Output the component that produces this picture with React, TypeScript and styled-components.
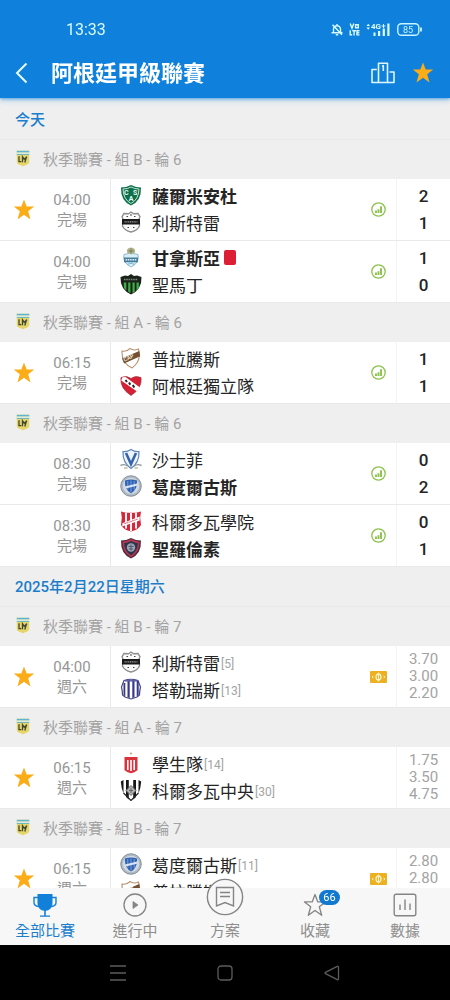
import React from "react";
import styled, { createGlobalStyle } from "styled-components";

const color = {
  brand: "#0f80dc",
  link: "#1b7ecb",
  ink: "#242424",
  muted: "#969696",
  faint: "#a3a3a3",
  band: "#efefef",
  line: "#e9e9e9",
  gold: "#fbac17",
  green: "#8bc34a",
};

const GlobalStyle = createGlobalStyle`
  * { box-sizing: border-box; }
  body {
    margin: 0;
    font-family: Roboto, "Noto Sans CJK TC", sans-serif;
    color: ${color.ink};
    background: #fff;
  }
  button { font: inherit; color: inherit; background: none; border: 0; padding: 0; cursor: pointer; }
  h1, h2, h3, ul, p { margin: 0; padding: 0; font-weight: 400; }
  ul { list-style: none; }
  svg { display: block; flex: none; }
`;

const Screen = styled.div`
  display: flex;
  flex-direction: column;
  height: 100vh;
`;

const Header = styled.header`
  background: ${color.brand};
  color: #fff;
  position: relative;
  z-index: 1;
  box-shadow: 0 1px 3px rgba(15, 128, 220, 0.6), 0 3px 6px rgba(15, 128, 220, 0.2);
`;

const StatusBar = styled.div`
  display: flex;
  align-items: center;
  justify-content: space-between;
  height: 48px;
  padding: 10px 28px 0 66px;
  font-size: 16px;
  color: #d8fbff;
`;

const StatusIcons = styled.div`
  display: flex;
  align-items: center;
  gap: 6px;
`;

const TitleBar = styled.div`
  display: flex;
  align-items: center;
  height: 50px;
  padding: 0 16px 0 14px;
`;

const Title = styled.h1`
  flex: 1;
  padding: 2px 0 0 22px;
  font-size: 22px;
  font-weight: 700;
  line-height: 32px;
`;

const TitleActions = styled.div`
  display: flex;
  align-items: center;
  gap: 17px;
`;

const Feed = styled.main`
  flex: 1;
  min-height: 0;
  padding-top: 2px;
  overflow-y: auto;
  background: ${color.band};
  scrollbar-width: none;
`;

const DateHeading = styled.h2`
  height: 40px;
  padding-left: 15px;
  border-bottom: 1px solid ${color.line};
  font-size: 15px;
  font-weight: 500;
  line-height: 40px;
  color: ${color.link};
`;

const LeagueHeading = styled.h3`
  display: flex;
  align-items: center;
  gap: 13px;
  height: 39px;
  padding: 0 0 2px 16px;
  font-size: 15px;
  color: ${color.faint};
`;

const MatchRow = styled.li`
  display: grid;
  grid-template-columns: 48px 63px 1fr 36px 53px;
  height: 62px;
  background: #fff;
  border-bottom: 1px solid ${color.line};
`;

const StarCell = styled.div`
  display: grid;
  place-items: center;
`;

const TimeCell = styled.div`
  display: flex;
  flex-direction: column;
  justify-content: center;
  padding-right: 14px;
  border-right: 1px solid ${color.line};
  font-size: 15px;
  line-height: 20px;
  text-align: center;
  color: ${color.muted};
`;

const Teams = styled.div`
  display: flex;
  flex-direction: column;
  justify-content: center;
  padding: 0 0 2px 9px;
`;

const TeamLine = styled.div<{ $winner?: boolean }>`
  display: flex;
  align-items: center;
  height: 27px;
  font-size: 17px;
  font-weight: ${(p) => (p.$winner ? 700 : 400)};
  white-space: nowrap;
`;

const TeamName = styled.span`
  padding-left: 10px;
`;

const Rank = styled.small`
  padding: 4px 0 0 1px;
  font-size: 12px;
  color: ${color.faint};
`;

const RedCard = styled.span`
  width: 12px;
  height: 15px;
  margin-left: 4px;
  border-radius: 2px;
  background: #dc1f35;
`;

const BadgeCell = styled.div`
  display: grid;
  place-items: center;
  padding-right: 1px;
  border-right: 1px solid #f3f3f3;
`;

const Results = styled.div<{ $odds?: boolean }>`
  display: flex;
  flex-direction: column;
  justify-content: center;
  text-align: center;
  font-size: ${(p) => (p.$odds ? 15 : 17)}px;
  font-weight: ${(p) => (p.$odds ? 400 : 500)};
  line-height: ${(p) => (p.$odds ? 17 : 27)}px;
  color: ${(p) => (p.$odds ? color.faint : color.ink)};
`;

const TabBar = styled.nav`
  display: grid;
  grid-template-columns: repeat(5, 1fr);
  position: relative;
  z-index: 1;
  height: 57px;
  background: #f7f7f7;
`;

const Tab = styled.button<{ $active?: boolean }>`
  display: flex;
  flex-direction: column;
  align-items: center;
  justify-content: flex-end;
  gap: 2px;
  padding-bottom: 3px;
  font-size: 15px;
  line-height: 22px;
  color: ${(p) => (p.$active ? color.link : "#8e8e8e")};
`;

const TabIcon = styled.span<{ $raised?: boolean }>`
  display: flex;
  align-items: ${(p) => (p.$raised ? "flex-end" : "center")};
  justify-content: center;
  position: relative;
  height: 26px;
  padding-bottom: ${(p) => (p.$raised ? 2 : 0)}px;
`;

const Count = styled.span`
  position: absolute;
  top: -2px;
  left: 16px;
  width: 21px;
  border-radius: 8px;
  background: #1278cf;
  color: #fff;
  font-size: 11px;
  line-height: 15px;
  text-align: center;
`;

const SystemBar = styled.div`
  display: flex;
  align-items: center;
  justify-content: space-around;
  height: 55px;
  padding: 0 64px;
  background: #000;
`;

/* ---------- icons ---------- */

const Star = ({ size = 22 }: { size?: number }) => (
  <svg width={size} height={size} viewBox="0 0 22 22" fill={color.gold}>
    <path d="M11 .6l2.700 7h7.500l-6 4.700 2.300 8.100L11 15.700l-6.500 4.700 2.300-8.100-6-4.700h7.500z" />
  </svg>
);

const BackIcon = () => (
  <svg width="15" height="22" viewBox="0 0 15 22" fill="none" stroke="#e6fbff" strokeWidth="2">
    <path d="M12.500 1.500L3 11l9.500 9.500" />
  </svg>
);

const PodiumIcon = () => (
  <svg width="24" height="22" viewBox="0 0 24 22" fill="none" stroke="#dff6ff" strokeWidth="1.600" strokeLinejoin="round">
    <path d="M7.500 20.500V1.200h9v19.300M5.800 7.500H1v13h22V10h-4.500M7.500 7.500v13M11 4.200l1.300-.5V9" />
  </svg>
);

const BellOff = () => (
  <svg width="12" height="13" viewBox="0 0 12 13" fill="none" stroke="#d8fbff" strokeWidth="1.400">
    <path d="M2.500 9.500V6.300a3.500 3.500 0 017 0v3.200M.5 9.700h11M4.800 11.700h2.400M6 1v1.500M1.500 1.800l9.500 10" />
  </svg>
);

const VoLte = () => (
  <svg width="11" height="13" viewBox="0 0 11 13" fill="none" stroke="#d8fbff" strokeWidth="1.400">
    <path d="M1.200.5L3 5.300 4.800.5M6.600 1.700h2.700v3H6.600zM1.200 7.200v4.600h2M3.300 7.700h3.600M5.100 7.700v4.700M10.500 7.700H8v4.200h2.500M8 9.800h2.300" />
  </svg>
);

const Signal = () => (
  <svg width="25" height="13" viewBox="0 0 25 13" fill="#d8fbff" fontFamily="Roboto, sans-serif" fontSize="8" fontWeight="700">
    <path d="M.5 3L2.200.8 4 3zM.5 4.500H4L2.200 6.700z" />
    <text x="5" y="6.300">4G</text>
    <path d="M15.500 2.500h4v1h-4zM17 1h1v4h-1zM7.500 9.500h2V13h-2zM12 8h2.200v5H12zM16.700 5.500h2.200V13h-2.200zM21.300.5h2.200V13h-2.200z" />
  </svg>
);

const Battery = () => (
  <svg width="25" height="13" viewBox="0 0 25 13" fill="none" stroke="#c8f4ff" strokeWidth="1.400">
    <rect x=".8" y=".8" width="21" height="11.400" rx="3.500" />
    <path d="M24 4.500v4" strokeWidth="1.800" />
    <text x="6" y="9.700" fontFamily="Roboto, sans-serif" fontSize="9" fill="#c8f4ff" stroke="none">85</text>
  </svg>
);

const LeagueLogo = () => (
  <svg width="14" height="17" viewBox="0 0 14 17">
    <path d="M.8.800h12.400v11.500c0 2-3.500 2.500-6.200 4.200-2.700-1.700-6.200-2.200-6.200-4.200z" fill="#e6d568" />
    <path d="M.8.800h12.400v1.700H.8z" fill="#5fb4cf" />
    <path d="M.8 2.500h12.400V4H.8z" fill="#dcebe4" />
    <path d="M.8 4h12.400v1H.8z" fill="#72b7bd" />
    <path d="M3 6.300v5.400h2.300M6.500 12.200V6.800l1.700 2.400 2.800-2.400M10.600 6.500L8.800 12.500" fill="none" stroke="#3f4633" strokeWidth="1.300" />
  </svg>
);

const StatsIcon = () => (
  <svg width="15" height="15" viewBox="0 0 15 15" fill="none" stroke={color.green}>
    <circle cx="7.500" cy="7.500" r="6.700" strokeWidth="1.300" />
    <path d="M5 8.500V11M7.500 7.300V11M10 4.200V11" strokeWidth="1.900" />
  </svg>
);

const CashIcon = () => (
  <svg width="17" height="12" viewBox="0 0 17 12">
    <rect width="17" height="12" rx="1" fill="#edb021" />
    <ellipse cx="8.500" cy="6" rx="2.400" ry="3" fill="none" stroke="#fff2c9" strokeWidth="1.300" />
    <path d="M8.500 1.500v9" stroke="#fff2c9" />
    <path d="M3.300 4.800L2.200 6l1.100 1.200M13.700 4.800L14.800 6l-1.100 1.200" fill="none" stroke="#fff2c9" />
  </svg>
);

const TrophyIcon = () => (
  <svg width="24" height="25" viewBox="0 0 24 25" fill="#127fd8">
    <path d="M4.500 1h15v9c0 4.500-2.500 7-6.700 7.800V22.500H17v1.300H7v-1.300h4.200v-4.700C7 17 4.500 14.500 4.500 10z" />
    <path d="M5 4.500H1v5c0 2.500 1.700 3.800 4.700 4M19 4.500h4v5c0 2.500-1.700 3.800-4.700 4" fill="none" stroke="#127fd8" strokeWidth="1.400" />
  </svg>
);

const PlayIcon = () => (
  <svg width="24" height="24" viewBox="0 0 24 24" fill="none" stroke="#858585" strokeWidth="1.300">
    <circle cx="12" cy="12" r="11" />
    <path d="M10 8.500l5 3.500-5 3.500z" fill="#858585" strokeWidth=".8" />
  </svg>
);

const PlanIcon = () => (
  <svg width="38" height="38" viewBox="0 0 38 38" fill="#f7f7f7" stroke="#858585" strokeWidth="1.400">
    <circle cx="19" cy="19" r="17.600" />
    <path d="M10.500 9.500h17v18.500L19 24.500l-8.500 3.500zM14 14.500h10M14 18.500h10" />
  </svg>
);

const OutlineStar = () => (
  <svg width="24" height="24" viewBox="0 0 24 24" fill="none" stroke="#858585" strokeWidth="1.300" strokeLinejoin="round">
    <path d="M12 1.500l2.800 7.400h7.700l-6.200 4.900 2.400 8.500L12 17.400l-6.700 4.900 2.400-8.500-6.200-4.900h7.700z" />
  </svg>
);

const DataIcon = () => (
  <svg width="24" height="24" viewBox="0 0 24 24" fill="none" stroke="#858585" strokeWidth="1.400">
    <rect x="1.200" y="1.200" width="21.600" height="21.600" rx="2" />
    <path d="M7 11.500V17M12 6.500V17M17 10.500V17" />
  </svg>
);

const stroke = { fill: "none", stroke: "#5c5c5c", strokeWidth: 1.3 };
const MenuIcon = () => (
  <svg width="16" height="16" viewBox="0 0 16 16" {...stroke}><path d="M0 1h16M0 8h16M0 15h16" /></svg>
);
const HomeIcon = () => (
  <svg width="16" height="16" viewBox="0 0 16 16" {...stroke}><rect x="1" y="1" width="14" height="14" rx="3" /></svg>
);
const SystemBackIcon = () => (
  <svg width="16" height="16" viewBox="0 0 16 16" {...stroke} strokeLinejoin="round">
    <path d="M14.500 2v12c0 .8-.7 1-1.300.6L1.500 8.600c-.6-.4-.6-.8 0-1.200l11.700-6c.6-.4 1.300-.2 1.300.6z" />
  </svg>
);

/* ---------- club crests ---------- */

const shield = "M1 3.500Q6 3.500 11 1q5 2.500 10 2.500Q21.500 17 11 21.500.5 17 1 3.500z";

const crests: Record<string, React.ReactNode> = {
  sarmiento: (
    <>
      <path d={shield} fill="#0e6f4b" />
      <path d="M3 5Q7.500 5 11 3q3.500 2 8 2-.3 10.500-8 14.500Q3.300 15.500 3 5z" fill="none" stroke="#d5eee2" strokeWidth=".9" />
      <g fill="#eefaf4" fontFamily="Roboto, sans-serif" fontSize="7" fontWeight="700">
        <text x="4" y="10.500">C</text><text x="13" y="10.500">S</text><text x="8.700" y="16.500">A</text>
      </g>
    </>
  ),
  riestra: (
    <>
      <path d="M11 1l2.500 1.800L18 2.500l2 3-.8 2 .3 7.500q-2 4.500-8.500 6-6.500-1.500-8.500-6l.3-7.500-.8-2 2-3 4.500.3z" fill="#fbfbfb" stroke="#909090" strokeWidth="1.400" />
      <path d="M2 8h18v5.500H2z" fill="#1b1b1b" />
      <path d="M4.500 10.800h13" stroke="#a3a3a3" strokeWidth="1.300" strokeDasharray="1.200 .6" />
      <path d="M6.500 5.500h1.500M14 5.500h1.500M10 4h2M7.500 16.500H9M13 16.500h1.500" stroke="#444" strokeWidth="1.200" />
    </>
  ),
  gimnasia: (
    <>
      <path d="M4 8.500q7-3 14 0 2 8-7 12.500Q2 16.500 4 8.500z" fill="#d9eff5" stroke="#8dbbd0" />
      <path d="M4 11.500h14v4.800H4z" fill="#477e9e" />
      <path d="M5.500 13.800h11" stroke="#dcedf4" strokeWidth="1.400" strokeDasharray="1.600 .7" />
      <path d="M7 6.500q-1-4.500 4-5 5 .5 4 5l-4 2z" fill="#b6b389" />
      <path d="M8.500 5h5M11 2.500v5" stroke="#697e5b" strokeWidth=".9" />
      <path d="M7 18.500q4-2.500 8 0" stroke="#75b8d4" fill="none" />
    </>
  ),
  sanmartin: (
    <>
      <path d="M.5 4l4.500-1.500L8 3l3-2 3 2 3-.5L21.500 4q.5 12.500-10.500 17.500Q0 16.500.5 4z" fill="#19231b" />
      <path d="M3.700 9.500h2.600v8L4 15zM8.200 9.500h2.200v10.400l-2.200-1.200zM12.500 9.500h2.200v9.300l-2.200 1.200zM16.500 9.500h2.300V15l-2.300 2.200z" fill="#3fae45" />
      <path d="M4 6.500h14" stroke="#7d8c7e" strokeWidth="1.400" strokeDasharray="1.500 .8" />
    </>
  ),
  platense: (
    <g transform="rotate(-7 11 11)">
      <path d="M3 3Q7.500 4.500 11 1.500 14.500 4.500 19.500 3q2 12-8.500 18Q.5 15 3 3z" fill="#fff" stroke="#b7906f" strokeWidth="1.100" />
      <path d="M2 10.500L20 5l.3 5.500L3.500 15.500z" fill="#735033" />
      <text transform="rotate(-17 4 14)" x="4" y="14" fill="#f5e9dc" fontFamily="Roboto, sans-serif" fontSize="5.500" fontWeight="700">CAP</text>
    </g>
  ),
  independiente: (
    <>
      <path d="M1 3.500Q7 1 11 4.500 15 1 21 3.500 22.500 14 11 21.500-.5 14 1 3.500z" fill="#d52035" stroke="#9f3440" strokeWidth=".7" />
      <path d="M2.500 3.300L5.500 3 20 13.500l-3.300 3.700L1.200 6.500z" fill="#fff" />
      <path d="M5.500 6l1.500 2M9 8.500l1.300 2.300M12.800 11l1.500 2.500" stroke="#2a2226" strokeWidth="2" />
    </>
  ),
  velez: (
    <>
      <path d="M3 3.500q4 .5 8-2 4 2.500 8 2Q19.500 14.500 11 20.500 2.500 14.500 3 3.500z" fill="#f0f5fc" stroke="#6285bb" strokeWidth="1.200" />
      <path d="M6 5L11 16l5-11" fill="none" stroke="#3465ad" strokeWidth="2.600" />
      <path d="M.5 17.500q4-2 7 .5M21.500 17.500q-4-2-7 .5" fill="none" stroke="#8e9794" strokeWidth="1.400" />
      <path d="M4 20h3.500M14.500 20H18" stroke="#a59b73" />
    </>
  ),
  godoy: (
    <>
      <circle cx="11" cy="11" r="10.300" fill="#aeb9c4" stroke="#75818e" strokeWidth=".8" />
      <circle cx="11" cy="11" r="8.200" fill="#d2d9df" />
      <path d="M5 5.500q6-2 12 0 .7 9-6 13-6.700-4-6-13z" fill="#2e62b3" />
      <path d="M7.800 6v8.500M11 5.500v12M14.200 6v8.500" stroke="#89a9dc" strokeWidth=".9" />
      <path d="M5 11.500L17 8.500v2.200L5.500 13.500z" fill="#d9e4f6" />
    </>
  ),
  instituto: (
    <>
      <path d="M1 1.500l5 1.200h10l5-1.200-.8 6 .8 7.500q-3 5-10 6.500Q4 20 1 15l.8-7.500z" fill="#d3283b" />
      <path d="M5 3h2v15.500H5zM10 3h2v18h-2zM15 3h2v15.500h-2z" fill="#fff2f2" />
      <path d="M2.300 13.200L19.700 6.500v4L2.300 16.500z" fill="#fff" />
      <path d="M4.500 13.800l13-4.800" stroke="#d44958" strokeWidth="1.100" strokeDasharray="1.300 .8" />
    </>
  ),
  sanlorenzo: (
    <>
      <path d={shield} fill="#542b3f" />
      <path d="M3.300 5.500Q7.500 5 11 3q3.500 2 7.700 2.500-.2 9.500-7.700 13.800Q3.500 15 3.300 5.500z" fill="#2c344f" stroke="#b9384a" strokeWidth="1.500" />
      <circle cx="11" cy="10.500" r="4.200" fill="#9ba3b3" />
      <path d="M8.500 9.500h5M9 12h4M11 7.500v6" stroke="#4c5368" strokeWidth=".9" />
    </>
  ),
  talleres: (
    <>
      <path d="M4 2.500q7-2.500 14 0L20.500 9q-1 4-1 8L17 19q-3 1.200-6 2-3-.8-6-2l-2.500-2q0-4-1-8z" fill="#fff" stroke="#47478d" strokeWidth="1.200" />
      <path d="M3.500 5h1.800v13.500L3.500 17zM7.500 2h2.200v18l-2.200-.7zM12.300 2h2.200v17.300l-2.200.7zM16.700 3h2v14l-2 1.500z" fill="#38388a" />
      <path d="M5 2.800h12" stroke="#5c5ca3" strokeWidth="1.500" />
    </>
  ),
  estudiantes: (
    <>
      <circle cx="11" cy="1.500" r="1" fill="#c59b66" />
      <path d="M4.500 5h13v13.200q-3 2.300-6.500 3-3.500-.7-6.500-3z" fill="#d9343e" />
      <path d="M7 8h1.600v10H7zM10.200 8h1.600v11h-1.600zM13.400 8H15v10h-1.600z" fill="#fff" />
    </>
  ),
  central: (
    <>
      <path d="M.8 2.500L3.500 1v13.500Q1.200 9 .8 2.500zM6 1h2.800v19.500L6 18zM13.200 1H16v17l-2.800 2.500zM18.500 1l2.700 1.500q-.4 6.500-2.700 12z" fill="#171717" />
      <path d="M3.500 14L11 21.500 18.500 14" fill="none" stroke="#262626" strokeWidth="1.200" />
      <path d="M11 6.500l5 5-5 5-5-5z" fill="#b4b4b4" stroke="#666" />
      <path d="M9 11.500h4M11 9v5" stroke="#686868" />
    </>
  ),
};

const Crest = ({ id }: { id: string }) => (
  <svg width="22" height="22" viewBox="0 0 22 22" aria-hidden="true">{crests[id]}</svg>
);

/* ---------- data ---------- */

type Team = { crest: string; name: string; winner?: boolean; red?: boolean; rank?: number };
type Match = {
  time: string;
  status: string;
  starred?: boolean;
  badge?: "stats" | "cash";
  teams: [Team, Team];
  results: string[];
};
type Group = { league: string; matches: Match[] };
type Day = { label: string; groups: Group[] };

const days: Day[] = [
  {
    label: "今天",
    groups: [
      {
        league: "秋季聯賽 - 組 B - 輪 6",
        matches: [
          {
            time: "04:00", status: "完場", starred: true, badge: "stats", results: ["2", "1"],
            teams: [{ crest: "sarmiento", name: "薩爾米安杜", winner: true }, { crest: "riestra", name: "利斯特雷" }],
          },
          {
            time: "04:00", status: "完場", badge: "stats", results: ["1", "0"],
            teams: [{ crest: "gimnasia", name: "甘拿斯亞", winner: true, red: true }, { crest: "sanmartin", name: "聖馬丁" }],
          },
        ],
      },
      {
        league: "秋季聯賽 - 組 A - 輪 6",
        matches: [
          {
            time: "06:15", status: "完場", starred: true, badge: "stats", results: ["1", "1"],
            teams: [{ crest: "platense", name: "普拉騰斯" }, { crest: "independiente", name: "阿根廷獨立隊" }],
          },
        ],
      },
      {
        league: "秋季聯賽 - 組 B - 輪 6",
        matches: [
          {
            time: "08:30", status: "完場", badge: "stats", results: ["0", "2"],
            teams: [{ crest: "velez", name: "沙士菲" }, { crest: "godoy", name: "葛度爾古斯", winner: true }],
          },
          {
            time: "08:30", status: "完場", badge: "stats", results: ["0", "1"],
            teams: [{ crest: "instituto", name: "科爾多瓦學院" }, { crest: "sanlorenzo", name: "聖羅倫素", winner: true }],
          },
        ],
      },
    ],
  },
  {
    label: "2025年2月22日星期六",
    groups: [
      {
        league: "秋季聯賽 - 組 B - 輪 7",
        matches: [
          {
            time: "04:00", status: "週六", starred: true, badge: "cash", results: ["3.70", "3.00", "2.20"],
            teams: [{ crest: "riestra", name: "利斯特雷", rank: 5 }, { crest: "talleres", name: "塔勒瑞斯", rank: 13 }],
          },
        ],
      },
      {
        league: "秋季聯賽 - 組 A - 輪 7",
        matches: [
          {
            time: "06:15", status: "週六", starred: true, results: ["1.75", "3.50", "4.75"],
            teams: [{ crest: "estudiantes", name: "學生隊", rank: 14 }, { crest: "central", name: "科爾多瓦中央", rank: 30 }],
          },
        ],
      },
      {
        league: "秋季聯賽 - 組 B - 輪 7",
        matches: [
          {
            time: "06:15", status: "週六", starred: true, badge: "cash", results: ["2.80", "2.80", "2.80"],
            teams: [{ crest: "godoy", name: "葛度爾古斯", rank: 11 }, { crest: "platense", name: "普拉騰斯" }],
          },
        ],
      },
    ],
  },
];

const tabs = [
  { label: "全部比賽", icon: <TrophyIcon />, active: true },
  { label: "進行中", icon: <PlayIcon /> },
  { label: "方案", icon: <PlanIcon />, raised: true },
  { label: "收藏", icon: <OutlineStar />, count: 66 },
  { label: "數據", icon: <DataIcon /> },
];

const MatchItem = ({ match }: { match: Match }) => (
  <MatchRow>
    <StarCell>{match.starred && <button aria-label="收藏"><Star /></button>}</StarCell>
    <TimeCell>
      <time>{match.time}</time>
      <span>{match.status}</span>
    </TimeCell>
    <Teams>
      {match.teams.map((team) => (
        <TeamLine key={team.name} $winner={team.winner}>
          <Crest id={team.crest} />
          <TeamName>{team.name}</TeamName>
          {team.rank && <Rank>[{team.rank}]</Rank>}
          {team.red && <RedCard />}
        </TeamLine>
      ))}
    </Teams>
    <BadgeCell>
      {match.badge === "stats" && <StatsIcon />}
      {match.badge === "cash" && <CashIcon />}
    </BadgeCell>
    <Results $odds={match.results.length === 3}>
      {match.results.map((value, i) => <span key={i}>{value}</span>)}
    </Results>
  </MatchRow>
);

export default function App() {
  return (
    <Screen>
      <GlobalStyle />
      <Header>
        <StatusBar>
          <span>13:33</span>
          <StatusIcons><BellOff /><VoLte /><Signal /><Battery /></StatusIcons>
        </StatusBar>
        <TitleBar>
          <button aria-label="返回"><BackIcon /></button>
          <Title>阿根廷甲級聯賽</Title>
          <TitleActions>
            <button aria-label="排名"><PodiumIcon /></button>
            <button aria-label="收藏"><Star /></button>
          </TitleActions>
        </TitleBar>
      </Header>
      <Feed>
        {days.map((day) => (
          <section key={day.label}>
            <DateHeading>{day.label}</DateHeading>
            {day.groups.map((group, i) => (
              <section key={i}>
                <LeagueHeading><LeagueLogo />{group.league}</LeagueHeading>
                <ul>{group.matches.map((match, j) => <MatchItem key={j} match={match} />)}</ul>
              </section>
            ))}
          </section>
        ))}
      </Feed>
      <TabBar>
        {tabs.map((tab) => (
          <Tab key={tab.label} $active={tab.active}>
            <TabIcon $raised={tab.raised}>
              {tab.icon}
              {tab.count && <Count>{tab.count}</Count>}
            </TabIcon>
            {tab.label}
          </Tab>
        ))}
      </TabBar>
      <SystemBar>
        <button aria-label="選單"><MenuIcon /></button>
        <button aria-label="主畫面"><HomeIcon /></button>
        <button aria-label="上一頁"><SystemBackIcon /></button>
      </SystemBar>
    </Screen>
  );
}
